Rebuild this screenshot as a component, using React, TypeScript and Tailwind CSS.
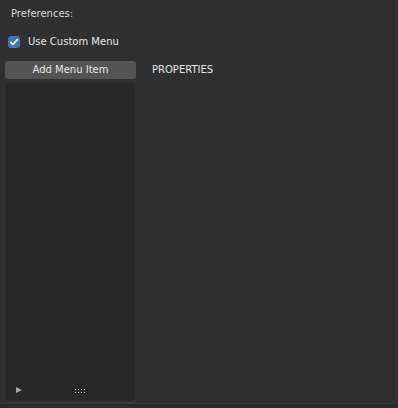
export default function App() {
  return (
    <div
      className="relative w-[398px] h-[408px] bg-[#2b2b2b] text-[10px] leading-[12px] text-[#e6e6e6]"
      style={{ fontFamily: '"DejaVu Sans", sans-serif' }}
    >
      <div className="w-[397px] h-[404px] bg-[#303030] border-r border-b border-[#383838] flex flex-col">
        {/* header */}
        <div className="pl-[11px] pt-[8px] h-[30px] text-[#d9d9d9]">Preferences:</div>

        {/* checkbox */}
        <div className="flex items-center gap-[8px] pl-[8px] h-[24px]">
          <div className="w-[12px] h-[12px] rounded-[3px] bg-[#4772b3] flex items-center justify-center">
            <svg width="10" height="10" viewBox="0 0 10 10">
              <path d="M1.8 5.2 L4 7.4 L8.4 2.6" fill="none" stroke="#fff" strokeWidth="1.6" strokeLinecap="round" strokeLinejoin="round" />
            </svg>
          </div>
          <span>Use Custom Menu</span>
        </div>

        {/* main split */}
        <div className="flex gap-[16px] pl-[5px] pt-[7px]">
          <div className="w-[131px] flex flex-col gap-[3px]">
            <div className="h-[18px] rounded-[3px] bg-[#545454] flex items-center justify-center text-[#e6e6e6]">
              Add Menu Item
            </div>
            <div className="relative h-[320px] rounded-[4px] bg-[#282828] border border-[#2e2e2e] shadow-[0_1px_0_#3a3a3a]">
              <svg className="absolute left-[10px] bottom-[8px]" width="7" height="6" viewBox="0 0 7 6">
                <path d="M0 0 L6 3 L0 6 Z" fill="#a8a8a8" />
              </svg>
              <div className="absolute left-[69px] bottom-[8px] grid grid-cols-4 gap-x-[2px] gap-y-[2px]">
                {Array.from({ length: 8 }).map((_, i) => (
                  <div key={i} className="w-[1px] h-[1px] bg-[#c8c8c8]" />
                ))}
              </div>
            </div>
          </div>
          <div className="pt-[3px] text-[#e6e6e6]">PROPERTIES</div>
        </div>
      </div>
    </div>
  )
}
